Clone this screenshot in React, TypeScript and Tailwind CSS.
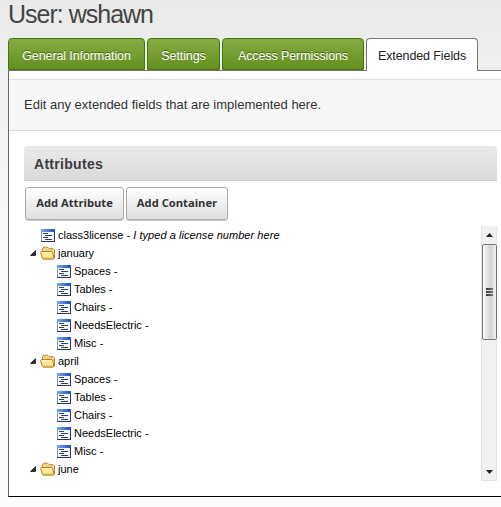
import React from "react";

const sans = "font-['Liberation_Sans',Arial,sans-serif]";

function FormIcon() {
  return (
    <svg width="14" height="13" viewBox="0 0 14 13" shapeRendering="crispEdges" className="shrink-0">
      <defs>
        <linearGradient id="bar" x1="0" x2="1" y1="0" y2="0">
          <stop offset="0" stopColor="#78a9ee" />
          <stop offset="1" stopColor="#1c50b4" />
        </linearGradient>
      </defs>
      <rect x="0" y="0" width="14" height="13" fill="#2b3a52" />
      <rect x="0" y="3" width="1" height="9" fill="#8497b5" />
      <rect x="1" y="3" width="12" height="9" fill="#eef5fb" />
      <rect x="0" y="0" width="14" height="3" fill="url(#bar)" />
      <path d="M2 4h5v1H2zM4 6h7v1H4zM2 8h5v1H2zM4 10h7v1H4z" fill="#38424e" />
    </svg>
  );
}

function FolderIcon() {
  return (
    <svg width="16" height="14" viewBox="0 0 16 14" className="shrink-0">
      <path d="M2.5 6V2.5L4 1.2h3.6L9 2.7h4.2l1.3 1.3v8L13 13H3z" fill="#f5d489" stroke="#bd8434" />
      <path d="M.6 6.4l.9-.9h10.3l.9.9 1.2 5.6-.8.9H3.2l-1-.8z" fill="#ffe88f" stroke="#b57a2a" />
      <path d="M2 6.8h9.8" stroke="#fffbd8" />
      <path d="M3 11.7h10" stroke="#f5cb68" />
    </svg>
  );
}

function Row({ label, value, kind = "child" }: { label: string; value?: string; kind?: "root" | "folder" | "child" }) {
  return (
    <div className={`flex h-[18px] items-center whitespace-nowrap ${kind === "child" ? "pl-[33px]" : kind === "root" ? "pl-[17px]" : "pl-[6px]"}`}>
      {kind === "folder" ? (
        <>
          <svg width="6" height="6" viewBox="0 0 6 6" className="mr-1 shrink-0">
            <path d="M.6 5.4h4.8V.8z" fill="#333" stroke="#222" />
          </svg>
          <FolderIcon />
        </>
      ) : (
        <FormIcon />
      )}
      <span className={`${kind === "folder" ? "ml-[2px]" : "ml-[3px]"} text-[11px] leading-[18px] text-black`}>
        {label}
        {kind !== "folder" && " - "}
        {value && <em className="tracking-[0.05px]">{value}</em>}
      </span>
    </div>
  );
}

const tabs = [
  { label: "General Information", width: "w-[137px]" },
  { label: "Settings", width: "w-[73px]" },
  { label: "Access Permissions", width: "w-[142px]" },
];
const fields = ["Spaces", "Tables", "Chairs", "NeedsElectric", "Misc"];

function Button({ children, width }: { children: React.ReactNode; width: string }) {
  return (
    <button className={`${width} h-[33px] rounded-[3px] border border-[#aaa] bg-linear-to-b from-white to-[#dfdfdf] font-['Open_Sans',sans-serif] text-[11.2px] font-bold whitespace-nowrap text-[#333] shadow-[0_1px_0_#ccc]`}>
      {children}
    </button>
  );
}

export default function App() {
  return (
    <div className={`${sans} h-[507px] w-[501px] overflow-hidden bg-linear-to-b from-[#e9e9e9] via-[#f2f2f2] via-20% to-[#fcfcfc] to-60%`}>
      <h1 className="h-[38px] pl-[8px] text-[25px] leading-[29px] tracking-[-1px] text-[#444]">User: wshawn</h1>
      <div className="ml-[8px] flex h-[33px] items-start gap-[2px] shadow-[inset_0_-1px_0_#777]">
        {tabs.map((t) => (
          <div
            key={t.label}
            className={`${t.width} h-[32px] rounded-t-[4px] border border-[#42780b] bg-linear-to-b from-[#86ac43] to-[#648f1e] text-center text-[12.5px] leading-[34px] tracking-[-0.1px] whitespace-nowrap text-white [text-shadow:0_-1px_0_#446c13]`}
          >
            {t.label}
          </div>
        ))}
        <div className="h-[33px] w-[112px] rounded-t-[4px] border border-b-0 border-[#777] bg-white text-center text-[12.5px] leading-[34px] tracking-[-0.1px] whitespace-nowrap text-[#222]">
          Extended Fields
        </div>
      </div>
      <div className="ml-[8px] h-[426px] border-b border-l border-b-black border-l-[#666] bg-white pt-[8px]">
        <div className="h-[52px] border-y border-[#ddd] bg-[#f7f7f7] pl-[15px] text-[13px] leading-[49px] text-[#333]">
          Edit any extended fields that are implemented here.
        </div>
        <div className="mt-[15px] ml-[15px] h-[35px] w-[473px] rounded-t-[3px] border-b border-[#ccc] bg-linear-to-b from-[#e9e9e9] to-[#dadada] pl-[10px] text-[14px] leading-[36px] font-bold tracking-[0.3px] text-[#3c3c3c]">
          Attributes
        </div>
        <div className="mt-[6px] ml-[16px] flex gap-[2px]">
          <Button width="w-[99px]">Add Attribute</Button>
          <Button width="w-[102px]">Add Container</Button>
        </div>
        <div className="mt-[6px] ml-[15px] flex h-[255px] w-[473px]">
          <div className="flex-1">
            <Row kind="root" label="class3license" value="I typed a license number here" />
            <Row kind="folder" label="january" />
            {fields.map((f) => <Row key={f} label={f} />)}
            <Row kind="folder" label="april" />
            {fields.map((f) => <Row key={f} label={f} />)}
            <Row kind="folder" label="june" />
          </div>
          <div className="flex w-[16px] flex-col items-center border-x border-b border-[#e2e2e2] bg-[#f0f0f0]">
            <svg width="7" height="18" viewBox="0 0 7 18" className="shrink-0"><path d="M0 11l3.5-4L7 11z" fill="#222" /></svg>
            <div className="flex h-[96px] w-[15px] shrink-0 flex-col items-center justify-center gap-[1px] rounded-[2px] border border-[#777] bg-linear-to-r from-[#fafafa] via-[#d2d3d6] via-60% to-[#f1f1f1]">
              <div className="h-[2px] w-[7px] bg-linear-to-r from-[#333] to-[#777]" />
              <div className="h-[2px] w-[7px] bg-linear-to-r from-[#333] to-[#777]" />
              <div className="h-[2px] w-[7px] bg-linear-to-r from-[#333] to-[#777]" />
            </div>
            <svg width="7" height="16" viewBox="0 0 7 16" className="mt-auto shrink-0"><path d="M0 6l3.5 4L7 6z" fill="#222" /></svg>
          </div>
        </div>
      </div>
    </div>
  );
}
